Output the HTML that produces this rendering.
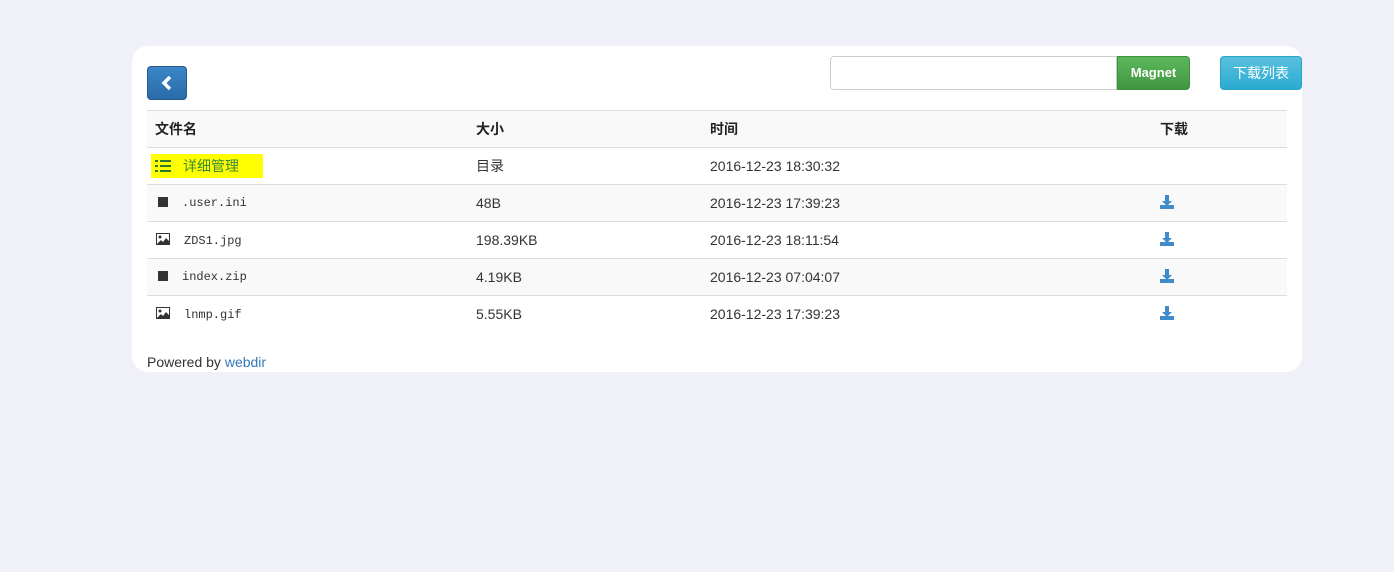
<!DOCTYPE html>
<html><head><meta charset="utf-8"><style>
body{margin:0;background:#f0f0f8;font-family:"Liberation Sans","Noto Sans CJK SC",sans-serif;font-size:14px;color:#333;}
.card{position:absolute;left:132px;top:46px;width:1170px;height:326px;background:#fff;border-radius:16px;}
.back{position:absolute;left:15px;top:20px;width:40px;height:34px;border-radius:4px;background:linear-gradient(#3b87c8,#2a6aa8);border:1px solid #265a88;box-sizing:border-box;}
.inp{position:absolute;left:698px;top:10px;width:287px;height:34px;border:1px solid #ccc;border-radius:4px 0 0 4px;box-sizing:border-box;}
.mag{position:absolute;left:985px;top:10px;width:73px;height:34px;background:linear-gradient(#5cb85c,#419641);color:#fff;font-weight:bold;font-size:13px;border-radius:0 4px 4px 0;text-align:center;line-height:32px;box-sizing:border-box;border:1px solid #3e8f3e;}
.dl{position:absolute;left:1088px;top:10px;width:82px;height:34px;background:linear-gradient(#5bc0de,#2aabd2);color:#fff;border-radius:4px;text-align:center;line-height:32px;border:1px solid #28a4c9;box-sizing:border-box;}
table{position:absolute;left:15px;top:64px;width:1140px;border-collapse:collapse;}
td,th{height:36px;border-top:1px solid #ddd;padding:0 8px;text-align:left;vertical-align:middle;}
th{font-weight:bold;color:#222;}
tr.s{background:#f9f9f9}
.m{font-family:"Liberation Mono","Noto Sans CJK SC",monospace;font-size:12px;color:#333}
.sq{display:inline-block;width:10px;height:10px;background:#333;margin:0 14px 0 3px;vertical-align:-1px}
.img{display:inline-block;width:14px;height:12px;margin:0 14px 0 1px;vertical-align:-1px}
.foot{position:absolute;left:15px;top:308px;}
a{color:#337ab7;text-decoration:none}
</style></head><body>
<div class="card">
<div class="back"><svg width="38" height="32" viewBox="0 0 38 32"><path d="M22 10 L16 16 L22 22" stroke="#fff" stroke-width="3.5" fill="none"/></svg></div>
<div class="inp"></div><div class="mag">Magnet</div><div class="dl">下载列表</div>
<table>
<tr class="s"><th style="width:305px">文件名</th><th style="width:218px">大小</th><th style="width:434px">时间</th><th>下载</th></tr>
<tr><td><span style="background:#ff0;display:inline-block;padding:2px 24px 2px 4px;margin-left:-4px"><svg width="16" height="12" viewBox="0 0 16 12" style="vertical-align:-1px;margin-right:12px"><g fill="#2a7a2a"><rect x="0" y="0" width="3" height="2"/><rect x="5" y="0" width="11" height="2"/><rect x="0" y="5" width="3" height="2"/><rect x="5" y="5" width="11" height="2"/><rect x="0" y="10" width="3" height="2"/><rect x="5" y="10" width="11" height="2"/></g></svg><span style="color:#3a8a3a">详细管理</span></span></td><td>目录</td><td>2016-12-23 18:30:32</td><td></td></tr>
<tr class="s"><td class="m"><span class="sq"></span>.user.ini</td><td>48B</td><td>2016-12-23 17:39:23</td><td><svg width="14" height="14" viewBox="0 0 14 14"><path d="M5 0h4v6h3l-5 5-5-5h3z" fill="#428bca"/><rect x="0" y="10" width="14" height="4" fill="#428bca"/></svg></td></tr>
<tr><td class="m"><svg class="img" viewBox="0 0 14 12"><rect x="0.5" y="0.5" width="13" height="11" fill="none" stroke="#333"/><circle cx="4" cy="4" r="1.5" fill="#333"/><path d="M1 11 L5 7 L7 9 L10 5 L13 8 V11Z" fill="#333"/></svg>ZDS1.jpg</td><td>198.39KB</td><td>2016-12-23 18:11:54</td><td><svg width="14" height="14" viewBox="0 0 14 14"><path d="M5 0h4v6h3l-5 5-5-5h3z" fill="#428bca"/><rect x="0" y="10" width="14" height="4" fill="#428bca"/></svg></td></tr>
<tr class="s"><td class="m"><span class="sq"></span>index.zip</td><td>4.19KB</td><td>2016-12-23 07:04:07</td><td><svg width="14" height="14" viewBox="0 0 14 14"><path d="M5 0h4v6h3l-5 5-5-5h3z" fill="#428bca"/><rect x="0" y="10" width="14" height="4" fill="#428bca"/></svg></td></tr>
<tr><td class="m"><svg class="img" viewBox="0 0 14 12"><rect x="0.5" y="0.5" width="13" height="11" fill="none" stroke="#333"/><circle cx="4" cy="4" r="1.5" fill="#333"/><path d="M1 11 L5 7 L7 9 L10 5 L13 8 V11Z" fill="#333"/></svg>lnmp.gif</td><td>5.55KB</td><td>2016-12-23 17:39:23</td><td><svg width="14" height="14" viewBox="0 0 14 14"><path d="M5 0h4v6h3l-5 5-5-5h3z" fill="#428bca"/><rect x="0" y="10" width="14" height="4" fill="#428bca"/></svg></td></tr>
</table>
<div class="foot">Powered by <a>webdir</a></div>
</div>
</body></html>
